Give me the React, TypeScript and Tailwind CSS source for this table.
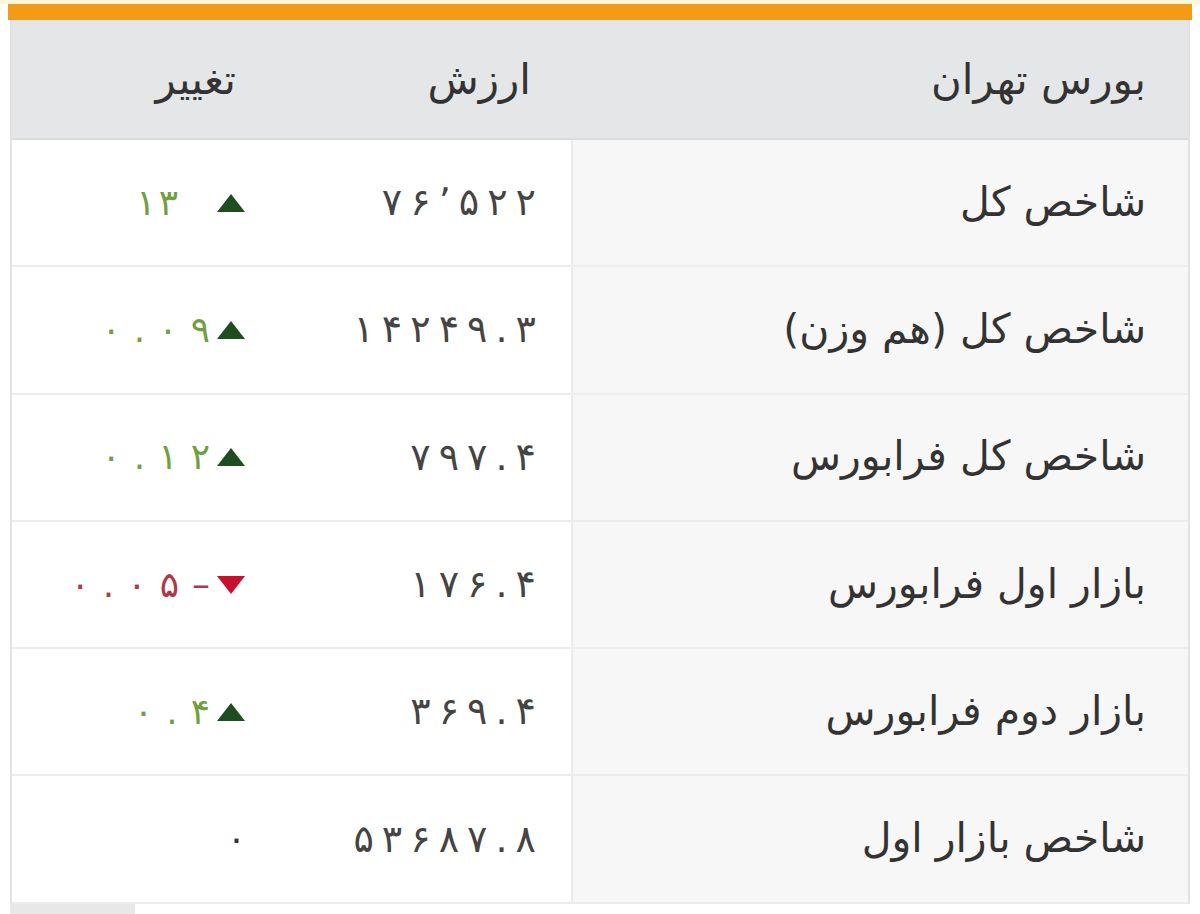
import type { ReactNode } from "react";

type Row = {
  name: string;
  value: string;
  change: string; // written in visual (left-to-right) order
  dir: "up" | "down" | "none";
  wide?: boolean;
};

const rows: Row[] = [
  { name: "شاخص کل", value: "۷۶٬۵۲۲", change: "۱۳", dir: "up", wide: true },
  { name: "شاخص کل (هم وزن)", value: "۱۴۲۴۹.۳", change: "۰.۰۹", dir: "up" },
  { name: "شاخص کل فرابورس", value: "۷۹۷.۴", change: "۰.۱۲", dir: "up" },
  { name: "بازار اول فرابورس", value: "۱۷۶.۴", change: "۰.۰۵–", dir: "down" },
  { name: "بازار دوم فرابورس", value: "۳۶۹.۴", change: "۰.۴", dir: "up" },
  { name: "شاخص بازار اول", value: "۵۳۶۸۷.۸", change: "۰", dir: "none" },
];

// Chrome drops letter-spacing for Arabic script, so space the digits by hand
function Digits({ text, className }: { text: string; className: string }) {
  return (
    <span dir="ltr" className={`inline-flex ${className}`}>
      {[...text].map((c, i) => (
        <span key={i}>{c}</span>
      ))}
    </span>
  );
}

function Triangle({ dir }: { dir: "up" | "down" }) {
  return dir === "up" ? (
    <svg width="30" height="20" viewBox="0 0 30 20" className="shrink-0">
      <path d="M15 1 L29 19 L1 19 Z" fill="#1f4d1f" />
    </svg>
  ) : (
    <svg width="30" height="20" viewBox="0 0 30 20" className="shrink-0">
      <path d="M1 1 L29 1 L15 19 Z" fill="#c8102e" />
    </svg>
  );
}

function Cell({ children, className }: { children: ReactNode; className: string }) {
  return <div className={`flex items-center ${className}`}>{children}</div>;
}

export default function App() {
  return (
    <div className="w-[1200px] h-[914px] bg-white overflow-hidden relative">
      <div className="h-[4px] bg-[#fdf7dc]" />
      <div className="mx-[8px] h-[16px] bg-[#f39a16]" />
      <div
        dir="rtl"
        className="ml-[10px] mr-[10px] border-l-2 border-r-2 border-[#e2e2e2] text-[#333]"
        style={{ fontFamily: '"DejaVu Sans", sans-serif' }}
      >
        {/* header */}
        <div className="grid grid-cols-[617px_287px_1fr] h-[120px] bg-[#e4e6e8] border-b-2 border-[#dadcde] text-[42px]">
          <Cell className="pr-[42px]">بورس تهران</Cell>
          <Cell className="pr-[40px]">ارزش</Cell>
          <Cell className="pr-[48px]">تغییر</Cell>
        </div>

        {rows.map((r) => (
          <div
            key={r.name}
            className="grid grid-cols-[617px_287px_1fr] h-[127.3px] border-b-2 border-[#ececec]"
          >
            <Cell className="pr-[42px] bg-[#f7f7f7] border-l-2 border-[#ececec] text-[41px] text-[#333]">
              {r.name}
            </Cell>
            <Cell className="pr-[35px] text-[38px] text-[#444]">
              <Digits text={r.value} className="gap-[8px]" />
            </Cell>
            <Cell className={`pr-[38px] text-[36px] ${r.wide ? "gap-[38px]" : "gap-[6px]"}`}>
              {r.dir !== "none" && <Triangle dir={r.dir} />}
              <Digits
                text={r.change}
                className={`${r.wide ? "gap-[3px]" : "gap-[13px]"} ${
                  r.dir === "up"
                    ? "text-[#6f9f3f]"
                    : r.dir === "down"
                      ? "text-[#b03848]"
                      : "text-[#333]"
                }`}
              />
            </Cell>
          </div>
        ))}
      </div>
      <div className="ml-[10px] w-[125px] h-[10px] bg-[#e8e8e8]" />
    </div>
  );
}
